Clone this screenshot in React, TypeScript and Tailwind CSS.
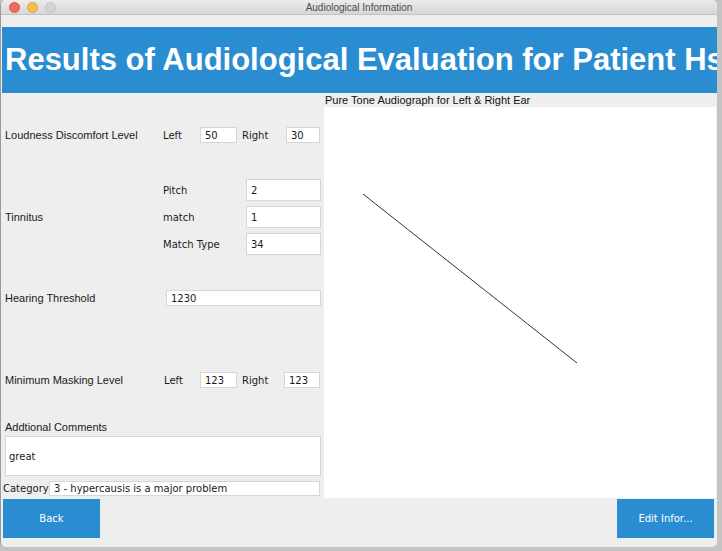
import React from 'react';

const label = "font-['Liberation_Sans',Arial,sans-serif] text-[11px] text-[#1a1a1a]";
const swing = "font-['DejaVu_Sans',sans-serif] text-[10px] text-[#1a1a1a]";

function Field({ value, className }: { value: string; className: string }) {
  return (
    <div className={`bg-white border border-[#d6d6d6] flex items-center pl-[4px] ${swing} ${className}`}>
      {value}
    </div>
  );
}

export default function App() {
  return (
    <div className="w-[722px] h-[551px] bg-[#c4c4c4] overflow-hidden">
      <div className="w-[717px] h-[547px] bg-[#eeeeee] rounded-[5px] overflow-hidden flex flex-col border-l border-[#9a9a9a]">
        {/* title bar */}
        <div className="h-[15px] shrink-0 bg-gradient-to-b from-[#ececec] to-[#d6d6d6] border-b border-[#c2c2c2] flex items-center relative">
          <div className="flex items-center gap-[7px] pl-[8px]">
            <span className="w-[11px] h-[11px] rounded-full bg-[#ee6a5f] border border-[#d9564b]" />
            <span className="w-[11px] h-[11px] rounded-full bg-[#f5be4f] border border-[#dba33a]" />
            <span className="w-[11px] h-[11px] rounded-full bg-[#d4d4d4] border border-[#c1c1c1]" />
          </div>
          <div className="absolute inset-0 flex items-center justify-center font-['Liberation_Sans',Arial,sans-serif] text-[10px] text-[#4a4a4a]">
            Audiological Information
          </div>
        </div>

        <div className="h-[12px] shrink-0" />

        {/* banner */}
        <div className="h-[66px] shrink-0 bg-[#2a8dd2] flex items-center overflow-hidden whitespace-nowrap ml-[1px]">
          <span className="font-['Liberation_Sans',Arial,sans-serif] font-bold text-[31px] text-white pl-[3px] tracking-[0px]">
            Results of Audiological Evaluation for Patient Hs
          </span>
        </div>

        {/* body */}
        <div className="flex h-[405px] shrink-0">
          {/* left */}
          <div className="w-[322px] shrink-0 flex flex-col pl-[3px] pr-[1px]">
            <div className="flex items-center h-[16px] mt-[34px]">
              <span className={`${label} w-[159px] pl-[1px]`}>Loudness Discomfort Level</span>
              <span className={`${swing} w-[37px]`}>Left</span>
              <Field value="50" className="w-[37px] h-[16px]" />
              <span className={`${swing} w-[49px] pl-[5px]`}>Right</span>
              <Field value="30" className="w-[34px] h-[16px]" />
            </div>

            <div className="flex mt-[36px]">
              <div className={`${label} w-[159px] pl-[1px] flex items-center`}>Tinnitus</div>
              <div className="flex flex-col gap-[5px]">
                {[
                  ['Pitch', '2'],
                  ['match', '1'],
                  ['Match Type', '34'],
                ].map(([k, v]) => (
                  <div key={k} className="flex items-center h-[22px]">
                    <span className={`${swing} w-[83px]`}>{k}</span>
                    <Field value={v} className="w-[75px] h-[22px]" />
                  </div>
                ))}
              </div>
            </div>

            <div className="flex items-center h-[16px] mt-[35px]">
              <span className={`${label} w-[162px] pl-[1px]`}>Hearing Threshold</span>
              <Field value="1230" className="w-[155px] h-[16px]" />
            </div>

            <div className="flex items-center h-[16px] mt-[66px]">
              <span className={`${label} w-[160px] pl-[1px]`}>Minimum Masking Level</span>
              <span className={`${swing} w-[36px]`}>Left</span>
              <Field value="123" className="w-[37px] h-[16px]" />
              <span className={`${swing} w-[47px] pl-[5px]`}>Right</span>
              <Field value="123" className="w-[36px] h-[16px]" />
            </div>

            <div className={`${label} mt-[31px] pl-[1px] h-[14px]`}>Addtional Comments</div>
            <div className={`bg-white border border-[#d6d6d6] h-[40px] mt-[3px] ml-[1px] w-[316px] flex items-center pl-[3px] ${swing}`}>
              great
            </div>

            <div className="flex items-center h-[15px] mt-[5px] -ml-[1px]">
              <span className={`${swing} w-[46px]`}>Category</span>
              <Field value="3 - hypercausis is a major problem" className="w-[271px] h-[15px] pl-[1px]" />
            </div>
          </div>

          {/* right */}
          <div className="flex-1 flex flex-col ml-[1px] mr-[1px]">
            <div className="h-[14px] flex items-center font-['Liberation_Sans',Arial,sans-serif] text-[11px] text-[#111] pl-[1px]">
              Pure Tone Audiograph for Left &amp; Right Ear
            </div>
            <div className="flex-1 bg-white">
              <svg width="391" height="391" className="block">
                <line x1="39" y1="87" x2="253" y2="256" stroke="#333" strokeWidth="1" />
              </svg>
            </div>
          </div>
        </div>

        {/* buttons */}
        <div className="flex justify-between h-[39px] pl-[2px] pr-[3px] mt-[1px] shrink-0">
          <button className="w-[97px] h-[39px] bg-[#2a8dd2] text-white font-['DejaVu_Sans',sans-serif] text-[10px]">
            Back
          </button>
          <button className="w-[97px] h-[39px] bg-[#2a8dd2] text-white font-['DejaVu_Sans',sans-serif] text-[10px]">
            Edit Infor...
          </button>
        </div>
      </div>
    </div>
  );
}
